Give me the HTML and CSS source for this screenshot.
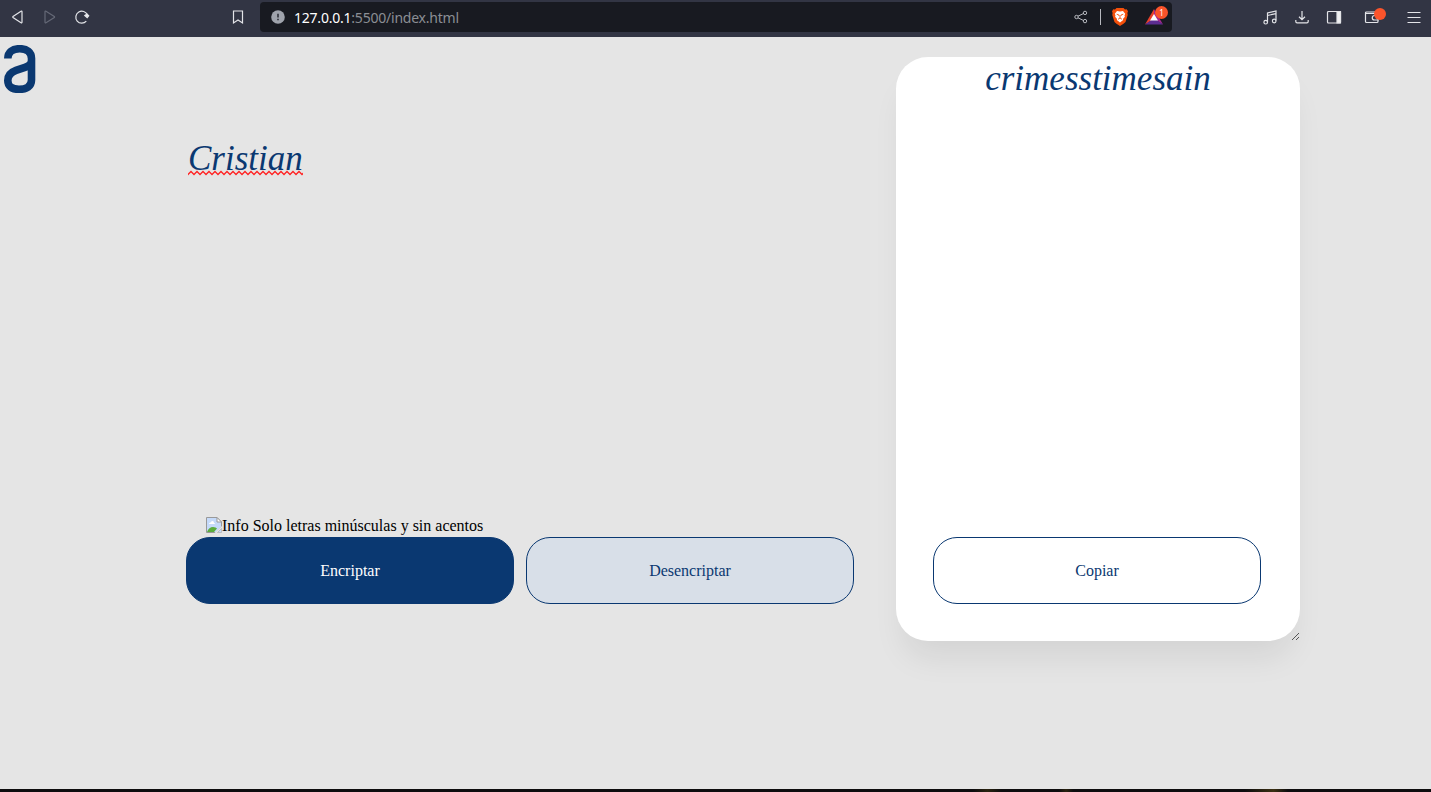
FILE: index.html
```html
<!DOCTYPE html>
<html lang="es">
<head>
<meta charset="utf-8">
<title>Encriptador</title>
<link rel="stylesheet" href="styles.css">
</head>
<body>
<header class="toolbar">
  <svg class="icon back" width="16" height="16" viewBox="0 0 16 16"><path d="M12 2.600v10.800q-.2.800-1 .4L3 8.600q-.6-.6 0-1.200L11 2.200q.8-.4 1 .4z"/></svg>
  <svg class="icon forward" width="16" height="16" viewBox="0 0 16 16"><path d="M3 2.600v10.800q.2.800 1 .4l8.300-5.200q.6-.6 0-1.200L4 2.200q-.8-.4-1 .4z"/></svg>
  <svg class="icon reload" width="16" height="16" viewBox="0 0 16 16"><path d="M12.300 12.200A6 6 0 1 1 13.400 6"/><path class="solid" d="M10.800 6.500l2.200-1.500 1.700 1.800-1.500 1.800z"/></svg>
  <svg class="icon mark" width="16" height="16" viewBox="0 0 16 16"><path d="M3.500 2h9v12L8 11l-4.500 3z"/></svg>
  <div class="address">
    <svg class="info" width="14" height="14" viewBox="0 0 14 14"><circle cx="7" cy="7" r="6.800" fill="#9fa3ac"/><path d="M7 3.800v3.800M7 8.700v1.600" stroke="#3b3e47" stroke-width="1.800"/></svg>
    <span class="url"><b>127.0.0.1</b>:5500/index.html</span>
    <svg class="icon share" width="14" height="14" viewBox="0 0 14 14"><path d="M4 6.200l5.300-2.600M4 7.800l5.300 2.600"/><circle cx="2.500" cy="7" r="1.700"/><circle cx="11" cy="2.900" r="1.700"/><circle cx="11" cy="11.100" r="1.700"/></svg>
    <span class="divider"></span>
    <svg class="brave" width="16" height="18" viewBox="0 0 16 18"><path d="M4.500 0h7l1.500 1.500 1.700-.2 1.300 2-.6 1.600.3 2-2.200 7.100-2 1.700L8 18l-3.500-2.300-2-1.700L.3 6.900l.3-2L0 3.300l1.300-2 1.700.2z" fill="#f4500b"/><path d="M5 3l3 .6 3-.6 2.200 2.700-.7 1.800.4 1.200-2 2.200.3 1.200L8 14.500l-3.200-2.400.3-1.200-2-2.200.4-1.200-.7-1.800z" fill="#fff"/><path d="M4.700 6.200l2 .6.100 1M11.300 6.200l-2 .6-.1 1M8 7v3M6 11.300l2-1.300 2 1.300" fill="none" stroke="#f4500b" stroke-width=".9"/></svg>
    <div class="rewards">
      <svg width="18" height="16" viewBox="0 0 18 16"><path d="M9 0L0 15.500 9 10z" fill="#e8402a"/><path d="M9 0l9 15.500L9 10z" fill="#a3278f"/><path d="M0 15.500h18L9 9z" fill="#5c2d91"/><path d="M9 5l4 6.500H5z" fill="#fff"/></svg>
      <span class="count">1</span>
    </div>
  </div>
  <svg class="icon music" width="16" height="16" viewBox="0 0 16 16"><path d="M5.500 13V4L14 2v9.500M5.500 6.500L14 4.600"/><circle cx="3.700" cy="13.200" r="1.800"/><circle cx="12.200" cy="12" r="1.800"/></svg>
  <svg class="icon download" width="16" height="16" viewBox="0 0 16 16"><path d="M8 2v8.500M5 7.700l3 2.900 3-2.900M1.800 11v1.500q0 1.300 1.300 1.300h9.800q1.300 0 1.300-1.300V11"/></svg>
  <svg class="icon sidebar" width="16" height="16" viewBox="0 0 16 16"><rect x="1.500" y="2.500" width="13" height="11.500" rx="1"/><path class="solid" d="M11 2.500h3.500V14H11z"/></svg>
  <div class="wallet">
    <svg class="icon" width="16" height="16" viewBox="0 0 16 16"><path d="M13 4.500V3H2.500Q1.500 3 1.500 4v8.500q0 1 1 1h10.500q1 0 1-1V11M1.500 4.500H14v2"/><path d="M14 6.500h-3.500a2.200 2.200 0 0 0 0 4.500H14z"/></svg>
    <span class="dot"></span>
  </div>
  <svg class="icon menu" width="16" height="16" viewBox="0 0 16 16"><path d="M1.500 3.500h13M1.500 8.500h13M1.500 13.500h13"/></svg>
</header>
<main class="page">
  <svg class="logo" width="32" height="49" viewBox="0 0 32 49"><path d="M3.800 13.500C3.800 7 8.500 3.700 15.700 3.700S27.500 7 27.500 13.500V35C27.500 41.500 22.500 44.300 15 44.300S3.800 41 3.800 35.500 7 27.200 12 25.400L21 22.300Q27.500 20 27.500 15.500" fill="none" stroke="#0a3871" stroke-width="7.600"/></svg>
  <section class="editor">
    <div class="entry"><span class="word">Cristian<svg class="squiggle" width="115" height="6"><defs><pattern id="wave" width="6" height="6" patternUnits="userSpaceOnUse"><path d="M-1 5.500L0 4.500 3 1.500 6 4.500 7 5.500" fill="none" stroke="#f22" stroke-width="1.400"/></pattern></defs><rect width="115" height="6" fill="url(#wave)"/></svg></span></div>
    <p class="hint"><svg class="broken" width="16" height="16" viewBox="0 0 16 16"><path d="M.5.500h10.500l4.500 4.500v5L10 15.500H.500z" fill="#c5dafa" stroke="#999"/><path d="M11 .5V5h4.500z" fill="#fff" stroke="#999"/><path d="M3 7q0-1.500 1.500-1.500.5-1.500 2-1.500t1.500 2q1 0 1 1z" fill="#fff"/><path d="M1 15q2-5 6-5 3 0 4 1.500L8 15z" fill="#5bad3c"/><path d="M16 9v2L11 16H8.500z" fill="#e5e5e5"/><path d="M15.500 11.500v4H11.500z" fill="#c5dafa" stroke="#aaa" stroke-width=".6"/></svg>Info Solo letras minúsculas y sin acentos</p>
    <div class="actions">
      <button class="btn primary">Encriptar</button>
      <button class="btn secondary">Desencriptar</button>
    </div>
  </section>
  <section class="result">
    <div class="output">crimesstimesain</div>
    <button class="btn copy">Copiar</button>
    <svg class="grip" width="9" height="9" viewBox="0 0 9 9"><path d="M1 8L8 1M5 8l3-3" stroke="#555" fill="none"/></svg>
  </section>
</main>
<footer class="edge"></footer>
</body>
</html>
```

FILE: styles.css
```css
* { box-sizing: border-box; }
body {
  margin: 0;
  height: 792px;
  display: flex;
  flex-direction: column;
  overflow: hidden;
  background: #e5e5e5;
  font: 16px "Liberation Serif", serif;
}
svg { display: block; flex: none; }
.toolbar {
  height: 37px;
  flex: none;
  display: flex;
  align-items: center;
  padding: 0 9px 3px 10px;
  background: #323544;
}
.icon { fill: none; stroke: #e3e4e8; stroke-width: 1.2; }
.icon .solid { fill: #f0f0f2; }
.forward { margin-left: 16px; stroke: #656977; }
.reload { margin-left: 16px; }
.mark { margin-left: 140px; }
.address {
  width: 912px;
  height: 30px;
  flex: none;
  margin-left: 14px;
  padding: 0 4px 0 11px;
  display: flex;
  align-items: center;
  border-radius: 4px;
  background: #181a21;
}
.url {
  margin-left: 9px;
  width: 170px;
  color: #8b8e94;
  font: 14px "Noto Sans", sans-serif;
  letter-spacing: -.22px;
  white-space: nowrap;
}
.url b { color: #fff; font-weight: 400; }
.share { margin-left: auto; stroke: #b8bac0; stroke-width: 1; }
.divider { width: 1px; height: 16px; margin: 0 11px 0 12px; background: #b8bac0; }
.rewards { position: relative; margin-left: 17px; width: 23px; }
.count {
  position: absolute;
  left: 10px;
  top: -3px;
  width: 13px;
  height: 13px;
  border-radius: 50%;
  background: #fb542b;
  color: #fff;
  font: 8px/13px "Noto Sans", sans-serif;
  text-align: center;
}
.music { margin-left: 90px; }
.download, .sidebar { margin-left: 16px; }
.wallet { position: relative; margin-left: 22px; }
.dot {
  position: absolute;
  left: 10px;
  top: -1px;
  width: 12px;
  height: 12px;
  border-radius: 50%;
  background: #fb542b;
}
.menu { margin-left: 26px; }
.page {
  flex: 1;
  display: grid;
  grid-template-columns: 32px 668px 404px;
  align-items: start;
}
.logo { margin: 8px 0 0 4px; }
.editor { margin-left: 154px; width: 668px; padding-top: 100px; }
.entry {
  height: 380px;
  padding: 2px;
  color: #0a3871;
  font-size: 35px;
  font-style: italic;
  line-height: 40px;
}
.word { position: relative; display: inline-block; }
.squiggle { position: absolute; left: 0; top: 31px; }
.hint { display: flex; align-items: center; height: 18px; margin: 0 0 2px 20px; white-space: pre; }
.broken { margin-bottom: 2px; }
.actions { display: flex; gap: 12px; }
.btn {
  width: 328px;
  height: 67px;
  padding: 0;
  border: 1px solid #0a3871;
  border-radius: 24px;
  color: #0a3871;
  font: 16px "Liberation Serif", serif;
}
.primary { background: #0a3871; color: #fff; }
.secondary { background: #d8dfe8; }
.result {
  position: relative;
  width: 404px;
  height: 584px;
  margin: 20px 0 0 196px;
  padding: 2px 2px 37px 0;
  display: flex;
  flex-direction: column;
  align-items: center;
  justify-content: space-between;
  border-radius: 32px;
  background: #fff;
  box-shadow: 0 24px 32px -8px rgba(0, 0, 0, .08);
}
.output { padding-left: 2px; color: #0a3871; font-size: 35px; font-style: italic; line-height: 40px; }
.copy { background: #fff; }
.grip { position: absolute; right: 0; bottom: 0; }
.edge { height: 3px; flex: none; background: linear-gradient(90deg, #0d0c0e 68%, #29220f 69%, #0d0c0e 70% 74%, #29220f 74.500%, #0d0c0e 75% 87%, #3b3013 89%, #0d0c0e 90%); }
```
